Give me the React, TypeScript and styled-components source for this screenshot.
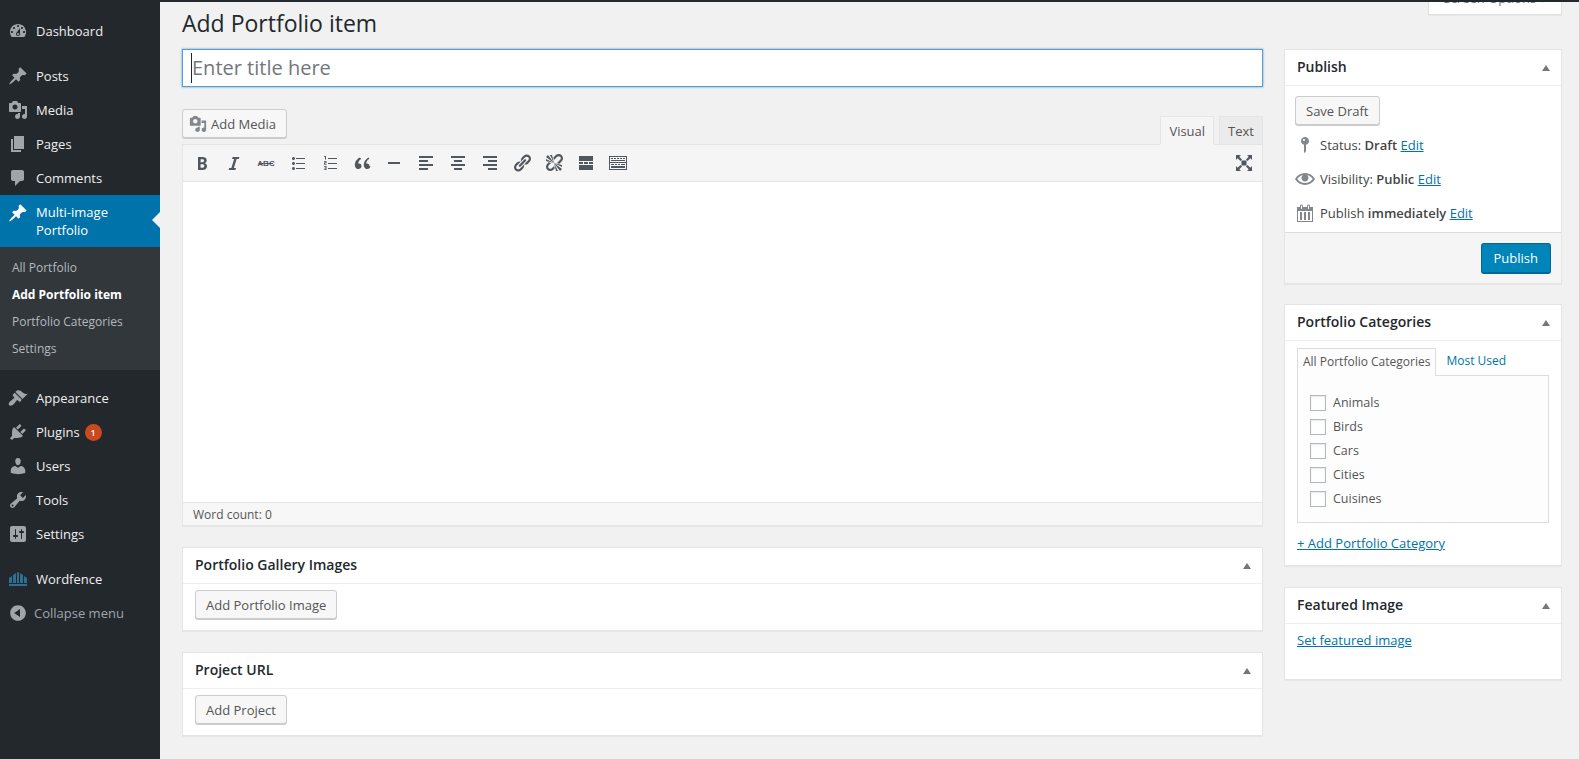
import React from "react";
import styled, { createGlobalStyle } from "styled-components";

const Global = createGlobalStyle`
  html, body { margin: 0; padding: 0; height: 100%; overflow: hidden; background: #f1f1f1; }
  body { font-family: "Open Sans", "Liberation Sans", sans-serif; font-size: 13px; line-height: 1.4em; color: #444; }
  * { box-sizing: border-box; }
`;

const P = {
  dashboard: "M3.76 16h12.48c1.1-1.37 1.76-3.11 1.76-5 0-4.42-3.58-8-8-8s-8 3.58-8 8c0 1.89.66 3.63 1.76 5zM10 4c.55 0 1 .45 1 1s-.45 1-1 1-1-.45-1-1 .45-1 1-1zM6 6c.55 0 1 .45 1 1s-.45 1-1 1-1-.45-1-1 .45-1 1-1zm8 0c.55 0 1 .45 1 1s-.45 1-1 1-1-.45-1-1 .45-1 1-1zm-5.37 5.55L12 7v6c0 1.1-.9 2-2 2s-2-.9-2-2c0-.57.24-1.08.63-1.45zM4 10c.55 0 1 .45 1 1s-.45 1-1 1-1-.45-1-1 .45-1 1-1zm12 0c.55 0 1 .45 1 1s-.45 1-1 1-1-.45-1-1 .45-1 1-1zm-5 3c0-.55-.45-1-1-1s-1 .45-1 1 .45 1 1 1 1-.45 1-1z",
  pin: "M10.44 3.02l1.82-1.82 6.36 6.35-1.83 1.82c-1.05-.68-2.48-.57-3.41.36l-.75.75c-.92.93-1.04 2.35-.35 3.41l-1.83 1.82-2.41-2.41-2.8 2.79c-.42.42-3.38 2.71-3.8 2.29s1.86-3.39 2.28-3.81l2.79-2.79L4.1 9.36l1.83-1.82c1.05.69 2.48.57 3.4-.36l.75-.75c.93-.92 1.05-2.35.36-3.41z",
  media: "M13 11V4c0-.55-.45-1-1-1h-1.67L9 1H5L3.67 3H2c-.55 0-1 .45-1 1v7c0 .55.45 1 1 1h10c.55 0 1-.45 1-1zM7 4.5c1.38 0 2.5 1.12 2.5 2.5S8.38 9.5 7 9.5 4.5 8.38 4.5 7 5.62 4.5 7 4.5zM14 6h5v10.5c0 1.38-1.12 2.5-2.5 2.5S14 17.88 14 16.5s1.12-2.5 2.5-2.5c.17 0 .34.02.5.05V9h-3V6zm-4 8.05V13h2v3.5c0 1.38-1.12 2.5-2.5 2.5S7 17.88 7 16.5 8.12 14 9.5 14c.17 0 .34.02.5.05z",
  page: "M6 15V2h10v13H6zm-1 1h8v2H3V5h2v11z",
  comments: "M5 2h9c1.1 0 2 .9 2 2v7c0 1.1-.9 2-2 2h-2l-5 5v-5H5c-1.1 0-2-.9-2-2V4c0-1.1.9-2 2-2z",
  appearance: "M14.48 11.06L7.41 3.99l1.5-1.5c.5-.56 2.3-.47 3.51.32 1.21.8 1.43 1.28 2.91 2.1 1.18.64 2.45 1.26 4.45.85zm-.71.71L6.7 4.7 4.93 6.47c-.39.39-.39 1.02 0 1.41l1.06 1.06c.39.39.39 1.03 0 1.42-.6.6-1.43 1.11-2.21 1.69-.35.26-.7.53-1.01.84C1.43 13.71 0 16.06 1.2 17.25c1.2 1.2 3.55-.23 4.91-1.57.31-.31.58-.66.84-1.01.58-.78 1.09-1.61 1.69-2.21.39-.39 1.02-.39 1.41 0l1.06 1.06c.39.39 1.02.39 1.41 0z",
  plugins: "M13.11 4.36L9.87 7.6 8 5.73l3.24-3.24c.35-.34 1.05-.2 1.56.32.52.51.66 1.21.31 1.55zm-8 1.77l.91-1.12 9.01 9.01-1.19.84c-.71.71-2.63 1.16-3.82 1.16H6.14L4.9 17.26c-.59.59-1.54.59-2.12 0-.59-.58-.59-1.53 0-2.12l1.24-1.24v-3.88c0-1.13.4-3.19 1.09-3.89zm7.26 3.97l3.24-3.24c.34-.35 1.04-.21 1.55.31.52.51.66 1.21.31 1.55l-3.24 3.25z",
  users: "M10 9.25c-2.27 0-2.73-3.44-2.73-3.44C7 4.02 7.82 2 9.97 2c2.16 0 2.98 2.02 2.71 3.81 0 0-.41 3.44-2.68 3.44zm0 2.57L12.72 10c2.39 0 4.52 2.33 4.52 4.53v2.49s-3.65 1.13-7.24 1.13c-3.65 0-7.24-1.13-7.24-1.13v-2.49c0-2.25 1.94-4.48 4.47-4.48z",
  tools: "M16.68 9.77c-1.34 1.34-3.3 1.67-4.95.99l-5.41 6.52c-.99.99-2.59.99-3.58 0s-.99-2.59 0-3.57l6.52-5.42c-.68-1.65-.35-3.61.99-4.95 1.28-1.28 3.12-1.62 4.72-1.06l-2.89 2.89 2.82 2.82 2.86-2.87c.53 1.58.18 3.39-1.08 4.65zM3.81 16.21c.4.39 1.04.39 1.43 0 .4-.4.4-1.04 0-1.43-.39-.4-1.03-.4-1.43 0-.39.39-.39 1.03 0 1.43z",
  settings: "M18 16V4c0-1.1-.9-2-2-2H4c-1.1 0-2 .9-2 2v12c0 1.1.9 2 2 2h12c1.1 0 2-.9 2-2zM8 11h1c.55 0 1 .45 1 1s-.45 1-1 1H8v1.5c0 .28-.22.5-.5.5s-.5-.22-.5-.5V13H6c-.55 0-1-.45-1-1s.45-1 1-1h1V5.5c0-.28.22-.5.5-.5s.5.22.5.5V11zm5-2h-1c-.55 0-1-.45-1-1s.45-1 1-1h1V5.5c0-.28.22-.5.5-.5s.5.22.5.5V7h1c.55 0 1 .45 1 1s-.45 1-1 1h-1v5.5c0 .28-.22.5-.5.5s-.5-.22-.5-.5V9z",
  collapse: "M10 2.16c4.33 0 7.84 3.51 7.84 7.84s-3.51 7.84-7.84 7.84S2.16 14.33 2.16 10 5.71 2.16 10 2.16zm2 11.72V6.12L6.18 9.97z",
  wordfence: "M1 14V9l3-2v7H1zm4 0V6l3-2v10H5zm4 0V3.5L10 3l1 .5V14H9zm3 0V4l3 2v8h-3zm4 0V7l3 2v5h-3zM1 15h18v2H1z",
  status: "M14 6c0 1.86-1.28 3.41-3 3.86V16c0 1-2 2-2 2V9.86C7.28 9.41 6 7.86 6 6c0-2.21 1.79-4 4-4s4 1.79 4 4zM8 5c0 .55.45 1 1 1s1-.45 1-1-.45-1-1-1-1 .45-1 1z",
  eye: "M19.7 9.4C17.7 6 14 3.9 10 3.9S2.3 6 .3 9.4L0 10l.3.6c2 3.4 5.7 5.5 9.7 5.5s7.7-2.1 9.7-5.5l.3-.6-.3-.6zM10 14.1c-3.1 0-6-1.6-7.7-4.1C3.6 8 5.7 6.6 8 6.1c-.9.6-1.5 1.7-1.5 2.9 0 1.9 1.6 3.5 3.5 3.5s3.5-1.6 3.5-3.5c0-1.2-.6-2.3-1.5-2.9 2.3.5 4.4 1.9 5.7 3.9-1.7 2.5-4.6 4.1-7.7 4.1z",
  calendar: "M15 4h3v15H2V4h3V3c0-.83.67-1.5 1.5-1.5S8 2.17 8 3v1h4V3c0-.83.67-1.5 1.5-1.5S15 2.17 15 3v1zM6 3v2.5a.5.5 0 0 0 1 0V3a.5.5 0 0 0-1 0zm7 0v2.5a.5.5 0 0 0 1 0V3a.5.5 0 0 0-1 0zm4 15V8H3v10h14zM5 9h2v8H5V9zm4 0h2v8H9V9zm4 0h2v8h-2V9z",
  bold: "M6 4v13h4.54c1.37 0 2.46-.33 3.26-1 .8-.66 1.2-1.58 1.2-2.77 0-.84-.17-1.51-.51-2.01s-.9-.85-1.67-1.03v-.09c.57-.1 1.02-.4 1.36-.9s.51-1.13.51-1.91c0-1.14-.39-1.98-1.17-2.5C12.75 4.26 11.5 4 9.78 4H6zm2.57 5.15V6.26h1.36c.73 0 1.27.11 1.61.32.34.22.51.58.51 1.07 0 .54-.16.92-.47 1.15s-.82.35-1.51.35h-1.5zm0 2.19h1.6c1.44 0 2.16.53 2.16 1.61 0 .6-.17 1.05-.51 1.34s-.86.43-1.57.43H8.57v-3.38z",
  italic: "M14.78 6h-2.13l-2.8 9h2.12l-.62 2H4.6l.62-2h2.14l2.8-9H8.03l.62-2h6.75z",
  ul: "M5.5 7C4.67 7 4 6.33 4 5.5 4 4.68 4.67 4 5.5 4 6.32 4 7 4.68 7 5.5 7 6.33 6.32 7 5.5 7zM8 5h9v1H8V5zm-2.5 7c-.83 0-1.5-.67-1.5-1.5C4 9.68 4.67 9 5.5 9c.82 0 1.5.68 1.5 1.5 0 .83-.68 1.5-1.5 1.5zM8 10h9v1H8v-1zm-2.5 7c-.83 0-1.5-.67-1.5-1.5 0-.82.67-1.5 1.5-1.5.82 0 1.5.68 1.5 1.5 0 .83-.68 1.5-1.5 1.5zM8 15h9v1H8v-1z",
  ol: "M5 3h1v3.5H5V4H4V3.4zM8 5h9v1H8V5zM4 8h2.5v2.2H5V11h1.5v.7H4V9.6h1.5v-.9H4zM8 10h9v1H8v-1zM4 13h2.5v4H4v-.7h1.5v-.9H4.4v-.7h1.1v-1H4zM8 15h9v1H8v-1z",
  quote: "M9.49 13.22c0-.74-.2-1.38-.61-1.9-.62-.78-1.83-.88-2.53-.72-.29-1.65 1.11-3.75 2.92-4.65L7.88 4.6c-2.73 1.3-5.42 4.28-4.96 8.05C3.21 15.05 4.9 16 6.3 16c1.73 0 3.19-1.26 3.19-2.78zm7.96 0c0-.74-.2-1.38-.61-1.9-.62-.78-1.83-.88-2.53-.72-.29-1.65 1.11-3.75 2.92-4.65l-.4-1.35c-2.73 1.3-5.42 4.28-4.96 8.05.29 2.4 1.98 3.35 3.38 3.35 1.73 0 3.2-1.26 3.2-2.78z",
  hr: "M4 9h12v2H4z",
  left: "M3 3h14v2H3zM3 7h9v2H3zM3 11h14v2H3zM3 15h9v2H3z",
  center: "M3 3h14v2H3zM6 7h8v2H6zM3 11h14v2H3zM6 15h8v2H6z",
  right: "M3 3h14v2H3zM8 7h9v2H8zM3 11h14v2H3zM8 15h9v2H8z",
  link: "M17.74 2.76c1.68 1.69 1.68 4.41 0 6.1l-1.53 1.52c-1.12 1.12-2.7 1.47-4.14 1.09l2.62-2.61.76-.77.76-.76c.84-.84.84-2.2 0-3.04-.84-.85-2.2-.85-3.04 0l-.77.76-3.38 3.38c-.37-1.44-.02-3.02 1.1-4.14l1.52-1.53c1.69-1.68 4.42-1.68 6.1 0zM8.59 13.43l5.34-5.34c.42-.42.42-1.1 0-1.52-.44-.43-1.13-.39-1.53 0l-5.33 5.34c-.42.42-.42 1.1 0 1.52.44.43 1.13.39 1.52 0zm-.76 2.29l4.14-4.15c.38 1.44.03 3.02-1.09 4.14l-1.52 1.53c-1.69 1.68-4.41 1.68-6.1 0-1.68-1.68-1.68-4.42 0-6.1l1.53-1.52c1.12-1.12 2.7-1.47 4.14-1.1l-4.14 4.15c-.85.84-.85 2.2 0 3.05.84.84 2.2.84 3.04 0z",
  unlink: "M17.74 2.26c1.68 1.69 1.68 4.41 0 6.1l-1.53 1.52c-.32.33-.69.58-1.08.77L13 10l1.69-1.64.76-.77.76-.76c.84-.84.84-2.2 0-3.04-.84-.85-2.2-.85-3.04 0l-.77.76-.76.76L10 7l-.65-2.14c.19-.38.44-.75.77-1.07l1.52-1.53c1.69-1.68 4.42-1.68 6.1 0zM2 4l8 6-6-8zm4-2l4 8-2-8H6zM2 6l8 4-8-2V6zm7.36 7.69L10 13l.74 2.35-1.38 1.39c-1.69 1.68-4.41 1.68-6.1 0-1.68-1.68-1.68-4.42 0-6.1l1.39-1.38L7 10l-.69.64-1.52 1.53c-.85.84-.85 2.2 0 3.04.84.85 2.2.85 3.04 0zM18 16l-8-6 6 8zm-4 2l-4-8 2 8h2zm4-4l-8-4 8 2v2z",
  more: "M3 3h14v5H3zM3 9h4v2H3zM8 9h4v2H8zM13 9h4v2h-4zM3 12h14v5H3z",
  sink: "M1 3h18v14H1zm1 1v5h16V4zm0 6v6h16v-6zM3 5h2v1H3zm3 0h2v1H6zm3 0h2v1H9zm3 0h2v1h-2zm3 0h2v1h-2zM3 7h14v1H3zM3 11h3v1H3zm4 0h2v1H7zm3 0h2v1h-2zm3 0h4v1h-4zM3 13h14v2H3z",
  full: "M2 2h5L5.3 3.7 8 6.5 6.5 8 3.7 5.3 2 7zM18 2v5l-1.7-1.7L13.5 8 12 6.5l2.7-2.8L13 2zM2 18v-5l1.7 1.7L6.5 12 8 13.5l-2.7 2.8L7 18zM18 18h-5l1.7-1.7-2.7-2.8 1.500-1.500 2.800 2.700L18 13zM7.500 7.500h5v5h-5z",
};

const Icon = styled.svg.attrs({ viewBox: "0 0 20 20" })<{ $size?: number; $color?: string }>`
  display: block;
  flex: none;
  width: ${(p) => p.$size ?? 20}px;
  height: ${(p) => p.$size ?? 20}px;
  fill: ${(p) => p.$color ?? "currentColor"};
`;
const Glyph = ({ d, size, color }: { d: string; size?: number; color?: string }) => (
  <Icon $size={size} $color={color}><path d={d} /></Icon>
);

const Page = styled.div`
  display: flex;
  height: 759px;
  overflow: hidden;
`;

/* ---------- admin menu ---------- */
const Sidebar = styled.nav`
  flex: none;
  width: 160px;
  background: #23282d;
  padding-top: 14px;
  color: #eee;
`;
const MenuGroup = styled.div<{ $top?: number }>`
  margin-top: ${(p) => p.$top ?? 0}px;
`;
const MenuRow = styled.div<{ $current?: boolean; $muted?: boolean }>`
  position: relative;
  display: flex;
  align-items: ${(p) => (p.$current ? "flex-start" : "center")};
  min-height: 34px;
  padding: ${(p) => (p.$current ? "8px 10px 8px 8px" : "0 0 0 8px")};
  gap: ${(p) => (p.$muted ? "6px" : "8px")};
  background: ${(p) => (p.$current ? "#0073aa" : "transparent")};
  color: ${(p) => (p.$current ? "#fff" : p.$muted ? "#a0a5aa" : "#eee")};
  font-size: 13px;
  line-height: 18px;
  svg { color: ${(p) => (p.$current ? "#fff" : "#a0a5aa")}; }
`;
const MenuArrow = styled.span`
  position: absolute;
  right: 0;
  top: 17px;
  width: 0;
  height: 0;
  border: 8px solid transparent;
  border-right-color: #f1f1f1;
  border-left-width: 0;
`;
const Badge = styled.span`
  display: inline-block;
  width: 17px;
  height: 17px;
  margin-left: 5px;
  border-radius: 50%;
  background: #ca4a1f;
  color: #fff;
  font-size: 9px;
  font-weight: 600;
  line-height: 17px;
  text-align: center;
  vertical-align: 1px;
`;
const SubMenu = styled.div`
  background: #32373c;
  padding: 7px 0 8px;
`;
const SubItem = styled.div<{ $active?: boolean }>`
  height: 27px;
  padding-left: 12px;
  font-size: 12px;
  line-height: 27px;
  color: ${(p) => (p.$active ? "#fff" : "#b4b9be")};
  font-weight: ${(p) => (p.$active ? 700 : 400)};
`;

/* ---------- main ---------- */
const Main = styled.main`
  flex: 1;
  min-width: 0;
  border-top: 2px solid #23282d;
  margin-left: 0;
  padding: 0 17px 0 22px;
`;
const TopBar = styled.header`
  display: flex;
  justify-content: space-between;
  align-items: flex-start;
  height: 47px;
`;
const Title = styled.h1`
  margin: 5px 0 0;
  font-size: 23px;
  font-weight: 400;
  line-height: 32px;
  color: #23282d;
`;
const ScreenTab = styled.div`
  width: 134px;
  height: 13px;
  overflow: hidden;
  background: #fff;
  border: 1px solid #e1e1e1;
  border-top: 0;
  box-shadow: 0 1px 1px rgba(0, 0, 0, 0.04);
  text-align: center;
  font-size: 13px;
  line-height: 18px;
  color: #72777c;
`;
const ScreenLabel = styled.div`
  margin-top: -13px;
`;
const Columns = styled.div`
  display: flex;
  align-items: flex-start;
  gap: 21px;
`;
const LeftCol = styled.div`
  flex: 1;
  min-width: 0;
`;
const RightCol = styled.aside`
  flex: none;
  width: 278px;
`;
const TitleField = styled.div`
  display: flex;
  align-items: center;
  height: 38px;
  padding-left: 8px;
  background: #fff;
  border: 1px solid #5b9dd9;
  box-shadow: 0 0 2px rgba(30, 140, 190, 0.8);
`;
const Caret = styled.span`
  width: 1px;
  height: 30px;
  background: #23282d;
`;
const Placeholder = styled.span`
  font-size: 20px;
  line-height: 30px;
  color: #72777c;
`;
const EditorHead = styled.div`
  display: flex;
  justify-content: space-between;
  align-items: flex-end;
  margin-top: 23px;
  height: 34px;
`;
const Button = styled.button<{ $h?: number }>`
  display: inline-flex;
  align-items: center;
  height: ${(p) => p.$h ?? 29}px;
  padding: 0 10px;
  background: #f7f7f7;
  border: 1px solid #ccc;
  border-radius: 3px;
  box-shadow: 0 1px 0 #ccc;
  font: 400 13px/26px "Open Sans", sans-serif;
  color: #555;
  white-space: nowrap;
`;
const MediaButton = styled(Button)`
  gap: 4px;
  padding: 0 10px 0 6px;
  margin-bottom: 6px;
  svg { color: #82878c; }
`;
const Tabs = styled.div`
  display: flex;
  gap: 5px;
`;
const Tab = styled.div<{ $active?: boolean }>`
  height: 29px;
  margin-bottom: -1px;
  padding: 0 8px;
  border: 1px solid ${(p) => (p.$active ? "#e5e5e5" : "#e5e5e5")};
  border-bottom: ${(p) => (p.$active ? "1px solid #f5f5f5" : "1px solid #e5e5e5")};
  background: ${(p) => (p.$active ? "#f5f5f5" : "#ebebeb")};
  color: #555;
  font-size: 13px;
  line-height: 29px;
  position: relative;
`;
const Editor = styled.div`
  border: 1px solid #e5e5e5;
  background: #fff;
  box-shadow: 0 1px 1px rgba(0, 0, 0, 0.04);
`;
const Toolbar = styled.div`
  display: flex;
  justify-content: space-between;
  align-items: center;
  height: 37px;
  padding: 0 8px 0 3px;
  background: #f5f5f5;
  border-bottom: 1px solid #e5e5e5;
  color: #50575e;
`;
const ToolGroup = styled.div`
  display: flex;
  align-items: center;
  gap: 12px;
  padding-left: 6px;
`;
const TextIcon = styled.svg.attrs({ viewBox: "0 0 20 20" })`
  display: block;
  width: 20px;
  height: 20px;
  text {
    font: 700 8px "Liberation Sans", sans-serif;
    fill: #50575e;
  }
`;
const EditArea = styled.div`
  height: 320px;
`;
const StatusBar = styled.div`
  height: 23px;
  padding-left: 10px;
  background: #f7f7f7;
  border-top: 1px solid #e5e5e5;
  font-size: 12px;
  line-height: 23px;
  color: #555;
`;
const Box = styled.section<{ $top?: number }>`
  margin-top: ${(p) => p.$top ?? 0}px;
  background: #fff;
  border: 1px solid #e5e5e5;
  box-shadow: 0 1px 1px rgba(0, 0, 0, 0.04);
`;
const BoxHead = styled.div`
  display: flex;
  justify-content: space-between;
  align-items: center;
  height: 36px;
  padding: 0 11px 0 12px;
  border-bottom: 1px solid #eee;
  font-size: 14px;
  font-weight: 600;
  color: #23282d;
`;
const Toggle = styled.span`
  width: 0;
  height: 0;
  border: 4px solid transparent;
  border-top: 0;
  border-bottom: 6px solid #72777c;
`;
const BoxBody = styled.div<{ $h?: number }>`
  padding: 7px 12px 0;
  height: ${(p) => (p.$h ? `${p.$h}px` : "auto")};
`;
const PublishBody = styled.div`
  padding: 10px 10px 0;
  height: 146px;
`;
const MetaRow = styled.div`
  display: flex;
  align-items: center;
  height: 34px;
  gap: 5px;
  svg { color: #82878c; }
  b { font-weight: 600; }
`;
const MetaList = styled.div`
  margin-top: 3px;
`;
const A = styled.a`
  color: #0073aa;
  text-decoration: underline;
`;
const PublishFoot = styled.div`
  display: flex;
  justify-content: flex-end;
  align-items: flex-start;
  height: 51px;
  padding: 10px 10px 0;
  background: #f5f5f5;
  border-top: 1px solid #ddd;
`;
const PrimaryButton = styled.button`
  height: 31px;
  padding: 0 12px;
  background: #0085ba;
  border: 1px solid #006799;
  border-bottom-width: 2px;
  border-radius: 3px;
  color: #fff;
  font: 400 13px "Open Sans", sans-serif;
`;
const CatTabs = styled.div`
  display: flex;
  margin-top: 0;
`;
const CatTab = styled.div<{ $active?: boolean }>`
  height: 28px;
  padding: 0 ${(p) => (p.$active ? 5 : 10)}px;
  font-size: 12px;
  line-height: 26px;
  color: ${(p) => (p.$active ? "#555" : "#0073aa")};
  background: ${(p) => (p.$active ? "#fdfdfd" : "transparent")};
  border: ${(p) => (p.$active ? "1px solid #ddd" : "0")};
  border-bottom: 0;
  margin-bottom: -1px;
  position: relative;
`;
const CatPanel = styled.div`
  height: 148px;
  padding: 15px 12px 0;
  background: #fdfdfd;
  border: 1px solid #ddd;
`;
const CatRow = styled.label`
  display: flex;
  align-items: center;
  height: 24px;
  gap: 7px;
  font-size: 12.5px;
  color: #555;
`;
const Check = styled.span`
  width: 16px;
  height: 16px;
  background: #fff;
  border: 1px solid #b4b9be;
  box-shadow: inset 0 1px 2px rgba(0, 0, 0, 0.1);
`;
const AddCat = styled(A)`
  display: block;
  margin-top: 11px;
  font-weight: 400;
  line-height: 18px;
  height: 31px;
`;
const MetaBoxBody = styled.div`
  padding: 6px 12px 0;
  height: 46px;
`;

const top = [
  { i: P.dashboard, t: "Dashboard" },
];
const content = [
  { i: P.pin, t: "Posts" },
  { i: P.media, t: "Media" },
  { i: P.page, t: "Pages" },
  { i: P.comments, t: "Comments" },
];
const tools = [P.bold, P.italic];

export default function App() {
  return (
    <Page>
      <Global />
      <Sidebar>
        {top.map((m) => (
          <MenuRow key={m.t}><Glyph d={m.i} />{m.t}</MenuRow>
        ))}
        <MenuGroup $top={11}>
          {content.map((m) => (
            <MenuRow key={m.t}><Glyph d={m.i} />{m.t}</MenuRow>
          ))}
          <MenuRow $current>
            <Glyph d={P.pin} />
            <span>Multi-image<br />Portfolio</span>
            <MenuArrow />
          </MenuRow>
          <SubMenu>
            <SubItem>All Portfolio</SubItem>
            <SubItem $active>Add Portfolio item</SubItem>
            <SubItem>Portfolio Categories</SubItem>
            <SubItem>Settings</SubItem>
          </SubMenu>
        </MenuGroup>
        <MenuGroup $top={11}>
          <MenuRow><Glyph d={P.appearance} />Appearance</MenuRow>
          <MenuRow><Glyph d={P.plugins} /><span>Plugins<Badge>1</Badge></span></MenuRow>
          <MenuRow><Glyph d={P.users} />Users</MenuRow>
          <MenuRow><Glyph d={P.tools} />Tools</MenuRow>
          <MenuRow><Glyph d={P.settings} />Settings</MenuRow>
        </MenuGroup>
        <MenuGroup $top={11}>
          <MenuRow><Glyph d={P.wordfence} color="#2f6f96" />Wordfence</MenuRow>
          <MenuRow $muted><Glyph d={P.collapse} />Collapse menu</MenuRow>
        </MenuGroup>
      </Sidebar>
      <Main>
        <TopBar>
          <Title>Add Portfolio item</Title>
          <ScreenTab><ScreenLabel>Screen Options ▾</ScreenLabel></ScreenTab>
        </TopBar>
        <Columns>
          <LeftCol>
            <TitleField><Caret /><Placeholder>Enter title here</Placeholder></TitleField>
            <EditorHead>
              <MediaButton><Glyph d={P.media} size={18} />Add Media</MediaButton>
              <Tabs>
                <Tab $active>Visual</Tab>
                <Tab>Text</Tab>
              </Tabs>
            </EditorHead>
            <Editor>
              <Toolbar>
                <ToolGroup>
                  {tools.map((d) => <Glyph key={d} d={d} />)}
                  <TextIcon><text x="10" y="13" textAnchor="middle">ABC</text><path d="M3 10h14v1H3z" fill="#50575e" /></TextIcon>
                  <Glyph d={P.ul} />
                  <Glyph d={P.ol} />
                  <Glyph d={P.quote} />
                  <Glyph d={P.hr} />
                  <Glyph d={P.left} />
                  <Glyph d={P.center} />
                  <Glyph d={P.right} />
                  <Glyph d={P.link} />
                  <Glyph d={P.unlink} />
                  <Glyph d={P.more} />
                  <Glyph d={P.sink} />
                </ToolGroup>
                <Glyph d={P.full} />
              </Toolbar>
              <EditArea />
              <StatusBar>Word count: 0</StatusBar>
            </Editor>
            <Box $top={21}>
              <BoxHead>Portfolio Gallery Images<Toggle /></BoxHead>
              <MetaBoxBody><Button>Add Portfolio Image</Button></MetaBoxBody>
            </Box>
            <Box $top={21}>
              <BoxHead>Project URL<Toggle /></BoxHead>
              <MetaBoxBody><Button>Add Project</Button></MetaBoxBody>
            </Box>
          </LeftCol>
          <RightCol>
            <Box>
              <BoxHead>Publish<Toggle /></BoxHead>
              <PublishBody>
                <Button>Save Draft</Button>
                <MetaList>
                  <MetaRow><Glyph d={P.status} /><span>Status: <b>Draft</b> <A>Edit</A></span></MetaRow>
                  <MetaRow><Glyph d={P.eye} /><span>Visibility: <b>Public</b> <A>Edit</A></span></MetaRow>
                  <MetaRow><Glyph d={P.calendar} /><span>Publish <b>immediately</b> <A>Edit</A></span></MetaRow>
                </MetaList>
              </PublishBody>
              <PublishFoot><PrimaryButton>Publish</PrimaryButton></PublishFoot>
            </Box>
            <Box $top={20}>
              <BoxHead>Portfolio Categories<Toggle /></BoxHead>
              <BoxBody>
                <CatTabs>
                  <CatTab $active>All Portfolio Categories</CatTab>
                  <CatTab>Most Used</CatTab>
                </CatTabs>
                <CatPanel>
                  {["Animals", "Birds", "Cars", "Cities", "Cuisines"].map((c) => (
                    <CatRow key={c}><Check />{c}</CatRow>
                  ))}
                </CatPanel>
                <AddCat>+ Add Portfolio Category</AddCat>
              </BoxBody>
            </Box>
            <Box $top={21}>
              <BoxHead>Featured Image<Toggle /></BoxHead>
              <BoxBody $h={55}><A>Set featured image</A></BoxBody>
            </Box>
          </RightCol>
        </Columns>
      </Main>
    </Page>
  );
}
